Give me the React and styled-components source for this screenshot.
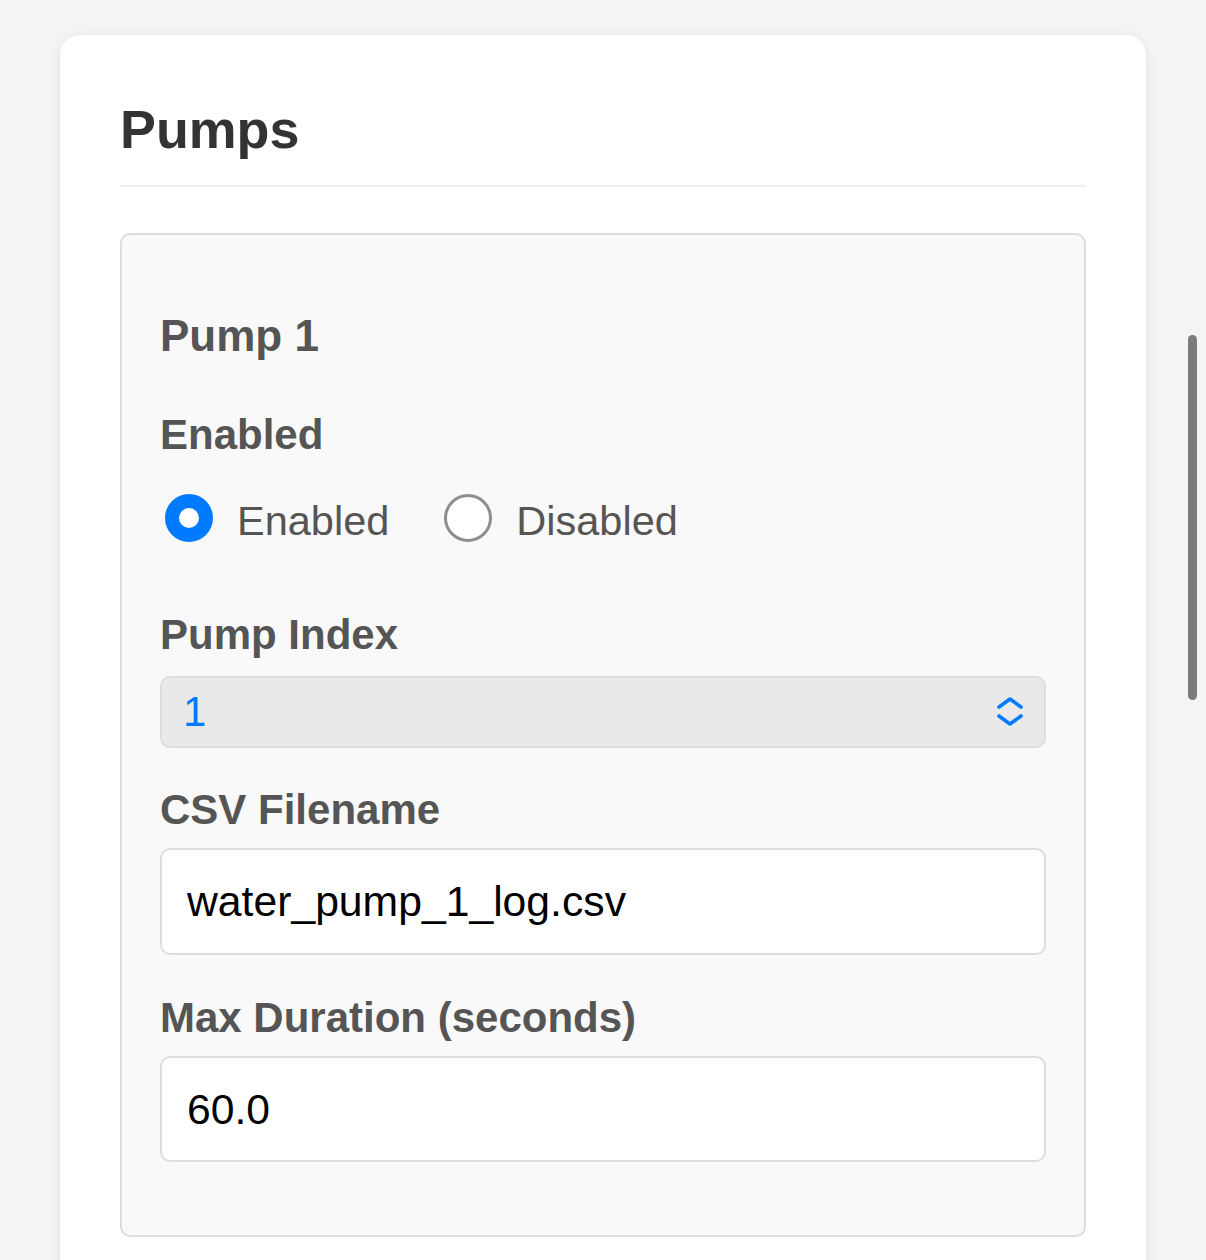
import React from "react";
import styled, { createGlobalStyle } from "styled-components";

const GlobalStyle = createGlobalStyle`
  *, *::before, *::after { box-sizing: border-box; }
  html, body {
    margin: 0;
    padding: 0;
    background: #f4f4f4;
    font-family: "Liberation Sans", Arial, Helvetica, sans-serif;
  }
`;

const Page = styled.div`
  padding: 35px 60px 0;
`;

const Card = styled.section`
  background: #ffffff;
  border-radius: 20px;
  box-shadow: 0 2px 12px rgba(0, 0, 0, 0.07);
  padding: 62px 60px 80px;
`;

const Title = styled.h2`
  margin: 0;
  font-size: 53.8px;
  line-height: 64px;
  font-weight: 700;
  color: #333333;
  padding-bottom: 24px;
  border-bottom: 2px solid #eeeeee;
`;

const PumpBox = styled.div`
  margin-top: 46px;
  background: #f9f9f9;
  border: 2px solid #dddddd;
  border-radius: 10px;
  padding: 38px 38px 73px;
  display: flex;
  flex-direction: column;
`;

const PumpTitle = styled.h3`
  margin: 37px 0 0;
  font-size: 44px;
  line-height: 52px;
  font-weight: 700;
  color: #555555;
`;

const FieldLabel = styled.label`
  display: block;
  margin-top: ${(p) => p.$gap}px;
  font-size: 42px;
  line-height: 50px;
  font-weight: 700;
  color: #555555;
`;

const RadioGroup = styled.div`
  margin-top: 34px;
  display: flex;
  align-items: center;
  gap: 50px;
  height: 48px;
`;

const RadioOption = styled.label`
  display: inline-flex;
  align-items: center;
  gap: 24px;
  padding-left: 5px;
  font-size: 41.5px;
  line-height: 50px;
  color: #555555;
`;

const RadioCircle = styled.span`
  flex: none;
  width: 48px;
  height: 48px;
  border-radius: 50%;
  background: #ffffff;
  border: ${(p) => (p.$checked ? "14.5px solid #007aff" : "3.5px solid #8e8e8e")};
`;

const RadioText = styled.span`
  padding-top: 6px;
`;

const SelectBox = styled.div`
  margin-top: 16px;
  height: 72px;
  display: flex;
  align-items: center;
  justify-content: space-between;
  padding: 0 19px 0 21px;
  background: #e9e9e9;
  border: 2px solid #dddddd;
  border-radius: 10px;
  font-size: 42px;
  color: #007aff;
`;

const TextInput = styled.input`
  display: block;
  width: 100%;
  margin-top: 13px;
  height: ${(p) => p.$h}px;
  padding: 0 25px;
  background: #ffffff;
  border: 2px solid #dddddd;
  border-radius: 10px;
  font-family: "Liberation Sans", Arial, Helvetica, sans-serif;
  font-size: 42.7px;
  color: #000000;
  outline: none;
`;

const ScrollIndicator = styled.div`
  position: fixed;
  left: 1188px;
  top: 335px;
  width: 9px;
  height: 365px;
  border-radius: 5px;
  background: #7b7b7b;
`;

function Chevrons() {
  return (
    <svg width="30" height="34" viewBox="0 0 30 34" fill="none" aria-hidden="true">
      <path d="M4 12 L15 4 L26 12" stroke="#007aff" strokeWidth="3.6" strokeLinecap="round" strokeLinejoin="round" />
      <path d="M4 21 L15 29 L26 21" stroke="#007aff" strokeWidth="3.6" strokeLinecap="round" strokeLinejoin="round" />
    </svg>
  );
}

export default function App() {
  return (
    <>
      <GlobalStyle />
      <Page>
        <Card>
          <Title>Pumps</Title>
          <PumpBox>
            <PumpTitle>Pump 1</PumpTitle>

            <FieldLabel $gap={48}>Enabled</FieldLabel>
            <RadioGroup role="radiogroup">
              <RadioOption>
                <RadioCircle $checked />
                <RadioText>Enabled</RadioText>
              </RadioOption>
              <RadioOption>
                <RadioCircle />
                <RadioText>Disabled</RadioText>
              </RadioOption>
            </RadioGroup>

            <FieldLabel $gap={68}>Pump Index</FieldLabel>
            <SelectBox role="combobox">
              <span>1</span>
              <Chevrons />
            </SelectBox>

            <FieldLabel $gap={37}>CSV Filename</FieldLabel>
            <TextInput $h={107} defaultValue="water_pump_1_log.csv" />

            <FieldLabel $gap={38}>Max Duration (seconds)</FieldLabel>
            <TextInput $h={106} defaultValue="60.0" />
          </PumpBox>
        </Card>
      </Page>
      <ScrollIndicator />
    </>
  );
}
